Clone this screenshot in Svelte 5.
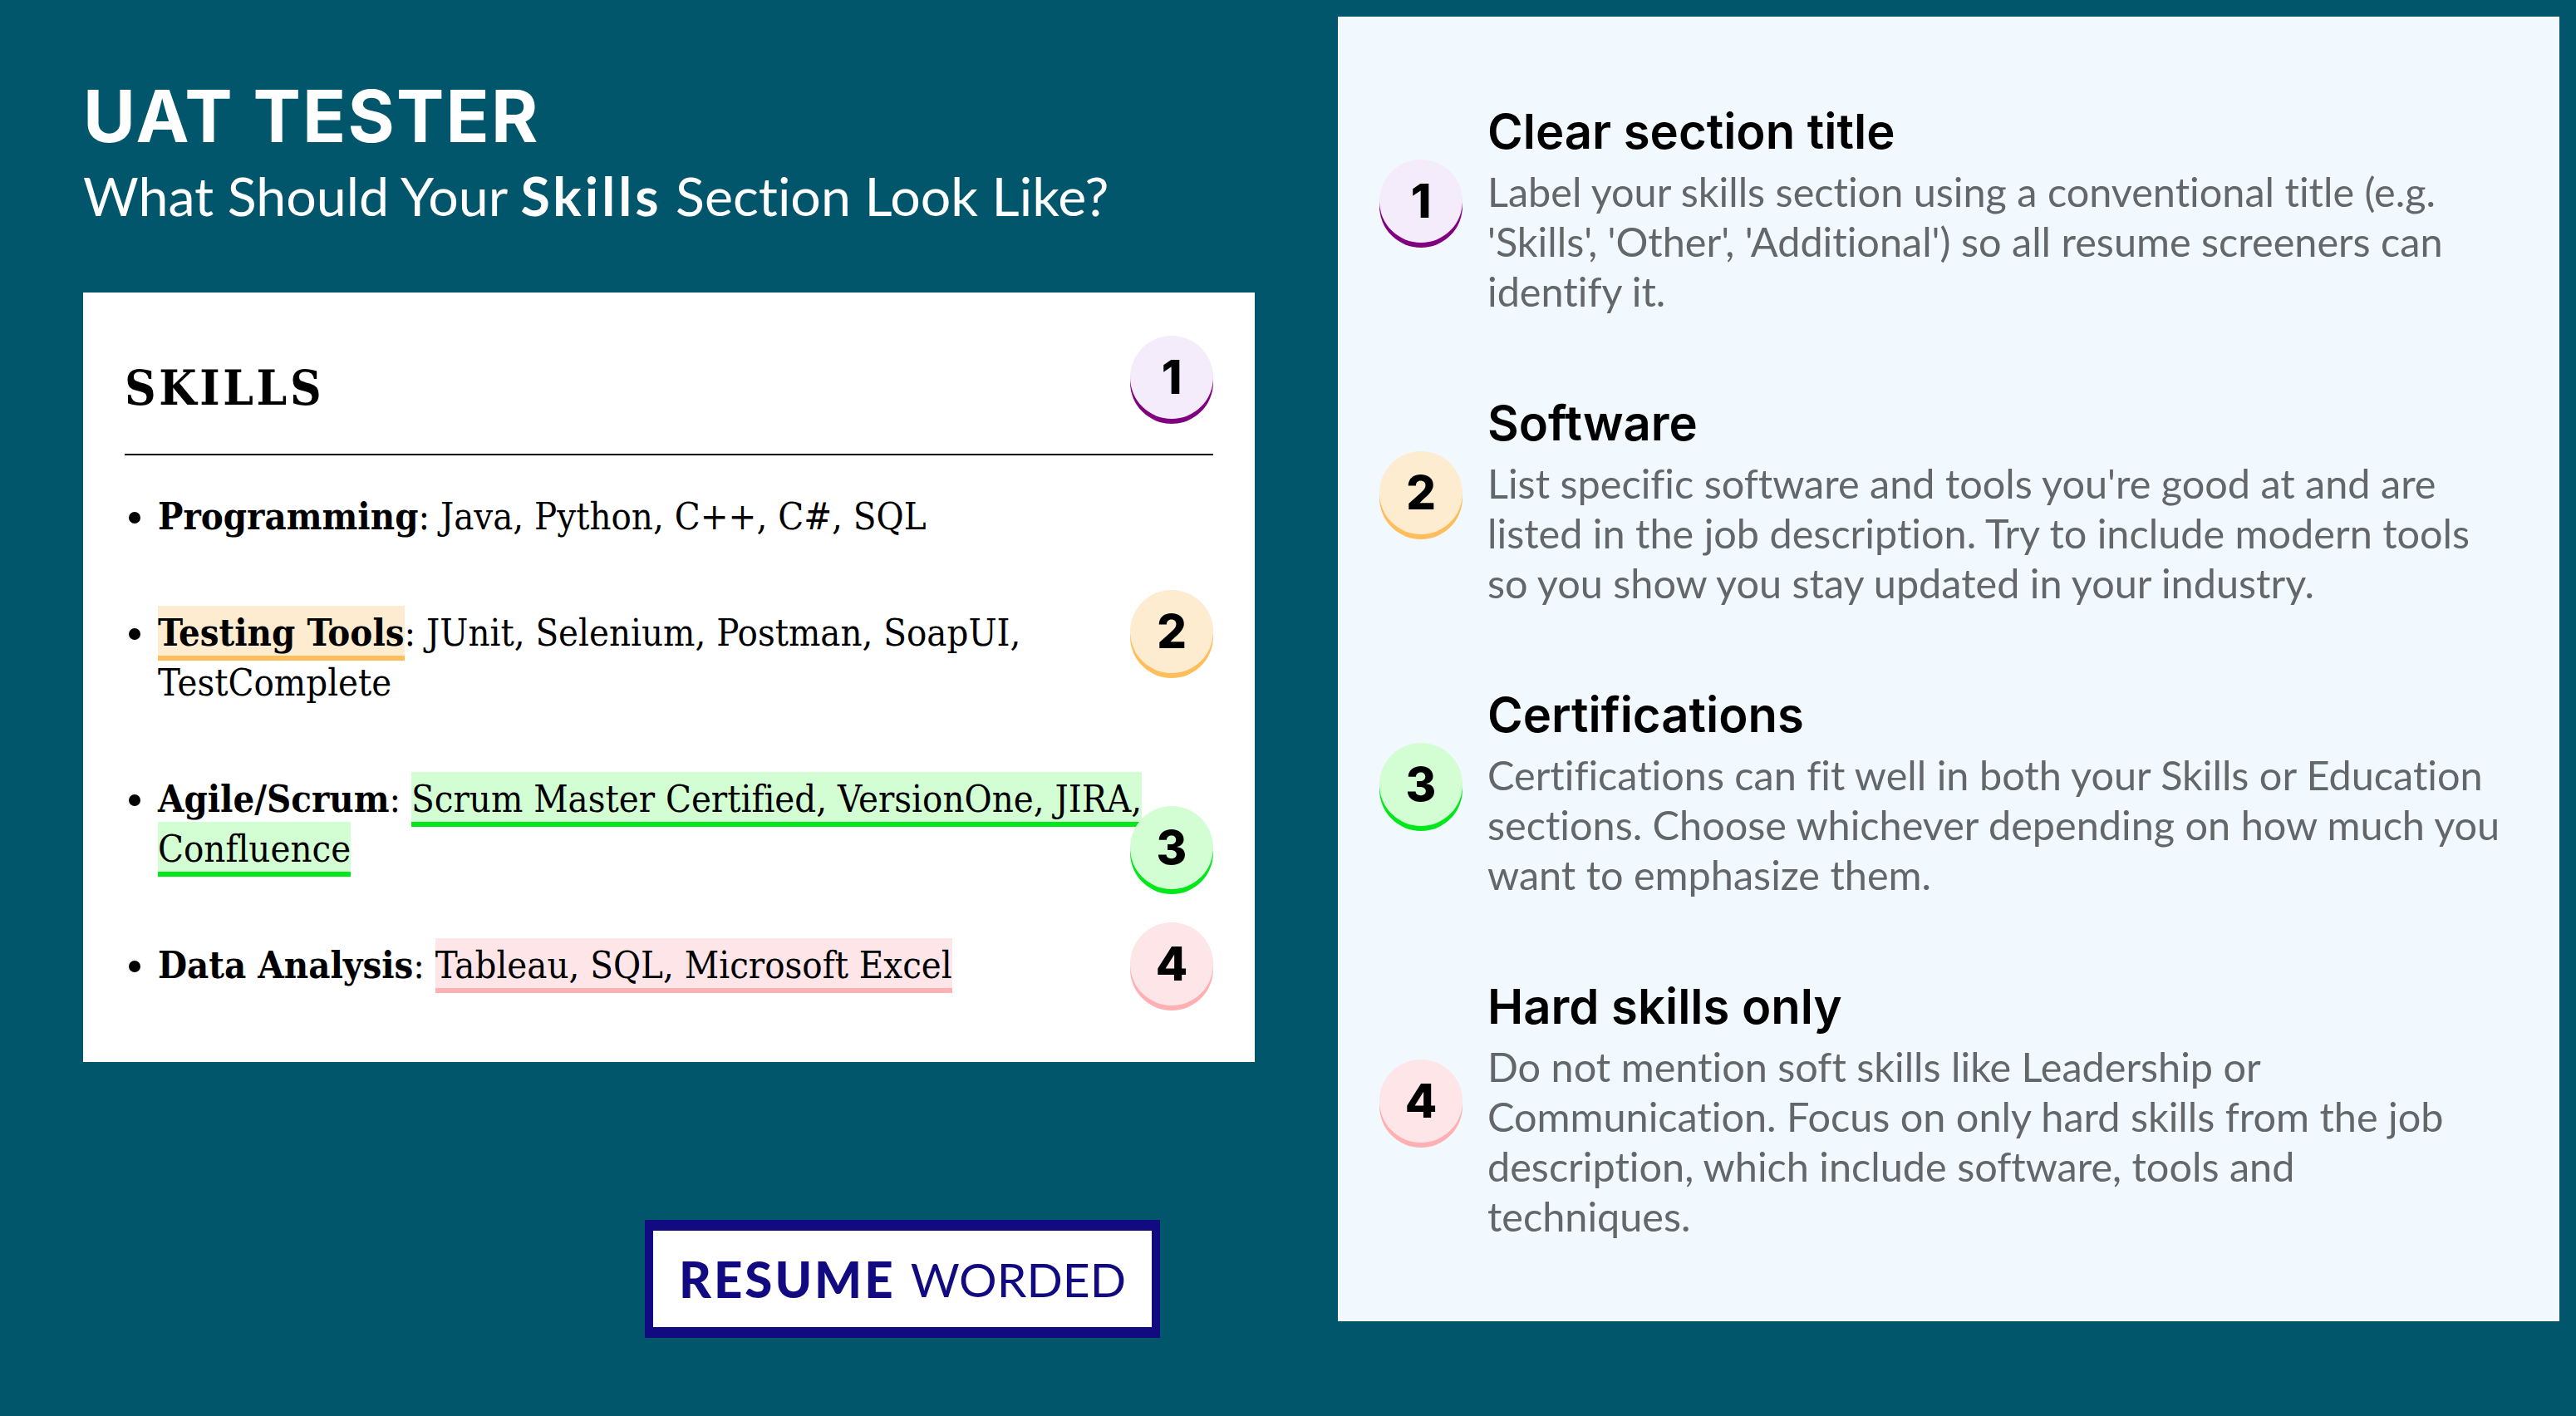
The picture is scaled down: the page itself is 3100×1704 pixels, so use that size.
<script>
  const skills = [
    { label: 'Programming', text: 'Java, Python, C++, C#, SQL' },
    { label: 'Testing Tools', text: 'JUnit, Selenium, Postman, SoapUI, TestComplete', mark: 'label', tone: 'orange' },
    { label: 'Agile/Scrum', text: 'Scrum Master Certified, VersionOne, JIRA, Confluence', mark: 'text', tone: 'green' },
    { label: 'Data Analysis', text: 'Tableau, SQL, Microsoft Excel', mark: 'text', tone: 'pink' }
  ];

  const tips = [
    {
      title: 'Clear section title',
      tone: 'purple',
      lines: "Label your skills section using a conventional title (e.g. 'Skills', 'Other', 'Additional') so all resume screeners can identify it."
    },
    {
      title: 'Software',
      tone: 'orange',
      lines: "List specific software and tools you're good at and are listed in the job description. Try to include modern tools so you show you stay updated in your industry."
    },
    {
      title: 'Certifications',
      tone: 'green',
      lines: 'Certifications can fit well in both your Skills or Education sections. Choose whichever depending on how much you want to emphasize them.'
    },
    {
      title: 'Hard skills only',
      tone: 'pink',
      lines: 'Do not mention soft skills like Leadership or Communication. Focus on only hard skills from the job description, which include software, tools and techniques.'
    }
  ];
</script>

<div class="page">
  <section class="left">
    <h1>UAT TESTER</h1>
    <p class="sub">What Should Your <b>Skills</b> Section Look Like?</p>

    <div class="card">
      <h2>SKILLS</h2>
      <ul>
        {#each skills as s}
          <li>
            <b class={s.mark === 'label' ? 'hl ' + s.tone : ''}>{s.label}</b>:
            <span class={s.mark === 'text' ? 'hl ' + s.tone : ''}>{s.text}</span>
          </li>
        {/each}
      </ul>
      <span class="badge purple pin-1">1</span>
      <span class="badge orange pin-2">2</span>
      <span class="badge green pin-3">3</span>
      <span class="badge pink pin-4">4</span>
    </div>

    <div class="logo"><b>RESUME</b> <span>WORDED</span></div>
  </section>

  <aside class="tips">
    {#each tips as tip, i}
      <div class="tip">
        <span class="badge {tip.tone}">{i + 1}</span>
        <div class="tip-body">
          <h3>{tip.title}</h3>
          <p>{tip.lines}</p>
        </div>
      </div>
    {/each}
  </aside>
</div>

<style>
  :global(body) {
    margin: 0;
    background: #02566b;
  }

  .page {
    width: 3100px;
    height: 1704px;
    box-sizing: border-box;
    padding: 20px 20px 0 100px;
    display: flex;
    justify-content: space-between;
    align-items: flex-start;
    font-family: 'Lato', sans-serif;
    font-variant-ligatures: none;
  }

  .left {
    width: 1410px;
    display: flex;
    flex-direction: column;
  }

  h1 {
    margin: 70px 0 0;
    font-family: 'Inter', sans-serif;
    font-size: 86px;
    line-height: 100px;
    font-weight: 700;
    letter-spacing: 2.2px;
    color: #fff;
  }

  .sub {
    margin: 2px 0 0;
    font-size: 64.5px;
    line-height: 86px;
    color: #fff;
  }

  .sub b {
    letter-spacing: 4px;
  }

  .card {
    position: relative;
    margin-top: 74px;
    height: 926px;
    box-sizing: border-box;
    padding: 50px 50px 0;
    background: #fff;
    color: #000;
    font-family: 'DejaVu Serif Condensed', 'DejaVu Serif', serif;
  }

  h2 {
    margin: 0;
    height: 146px;
    box-sizing: border-box;
    border-bottom: 2px solid #000;
    font-size: 58px;
    line-height: 130px;
    letter-spacing: 3.6px;
    font-weight: 700;
  }

  ul {
    margin: 44px 0 0;
    padding: 0 0 0 40px;
    width: 1190px;
    display: flex;
    flex-direction: column;
    gap: 80px;
    font-size: 45px;
    line-height: 60px;
  }

  .hl {
    padding: 6px 0 1px;
    border-bottom: 6px solid;
    -webkit-box-decoration-break: clone;
    box-decoration-break: clone;
  }

  .hl.orange { background: #fdeccf; border-color: #ffbe5c; }
  .hl.green { background: #d3fdd3; border-color: #00e81a; }
  .hl.pink { background: #fde5e8; border-color: #ffb0b3; }

  .badge {
    flex: none;
    width: 100px;
    height: 100px;
    border-radius: 50%;
    display: flex;
    align-items: center;
    justify-content: center;
    font-family: 'Inter', sans-serif;
    font-weight: 800;
    font-size: 56px;
    color: #000;
  }

  .badge.purple { background: #f4ecfa; box-shadow: 0 6px 0 #800080; }
  .badge.orange { background: #fdeccf; box-shadow: 0 6px 0 #ffbe5c; }
  .badge.green { background: #d3fdd3; box-shadow: 0 6px 0 #00e81a; }
  .badge.pink { background: #fde5e8; box-shadow: 0 6px 0 #ffb0b3; }

  .pin-1, .pin-2, .pin-3, .pin-4 {
    position: absolute;
    right: 50px;
  }

  .pin-1 { top: 52px; }
  .pin-2 { top: 358px; }
  .pin-3 { top: 618px; }
  .pin-4 { top: 758px; }

  .logo {
    align-self: flex-start;
    margin: 190px 0 0 676px;
    width: 620px;
    height: 142px;
    box-sizing: border-box;
    border: 10px solid #120a80;
    border-top-width: 13px;
    border-bottom-width: 13px;
    background: #fff;
    color: #120a80;
    display: flex;
    align-items: center;
    justify-content: center;
    gap: 18px;
    font-size: 57px;
    white-space: nowrap;
  }

  .logo b {
    font-size: 60px;
    font-weight: 900;
    letter-spacing: 3px;
  }

  .tips {
    width: 1470px;
    height: 1570px;
    box-sizing: border-box;
    padding: 103px 50px 0;
    background: #f1f8fe;
    display: flex;
    flex-direction: column;
    gap: 94px;
  }

  .tip {
    display: flex;
    align-items: center;
    gap: 30px;
  }

  .tip > .badge {
    margin-top: -20px;
  }

  h3 {
    margin: 0 0 7px;
    font-family: 'Inter', sans-serif;
    font-size: 58px;
    line-height: 70px;
    font-weight: 600;
    color: #000;
  }

  .tip-body p {
    margin: 0;
    max-width: 1219px;
    font-size: 48.6px;
    line-height: 60px;
    color: #63676a;
  }
</style>
